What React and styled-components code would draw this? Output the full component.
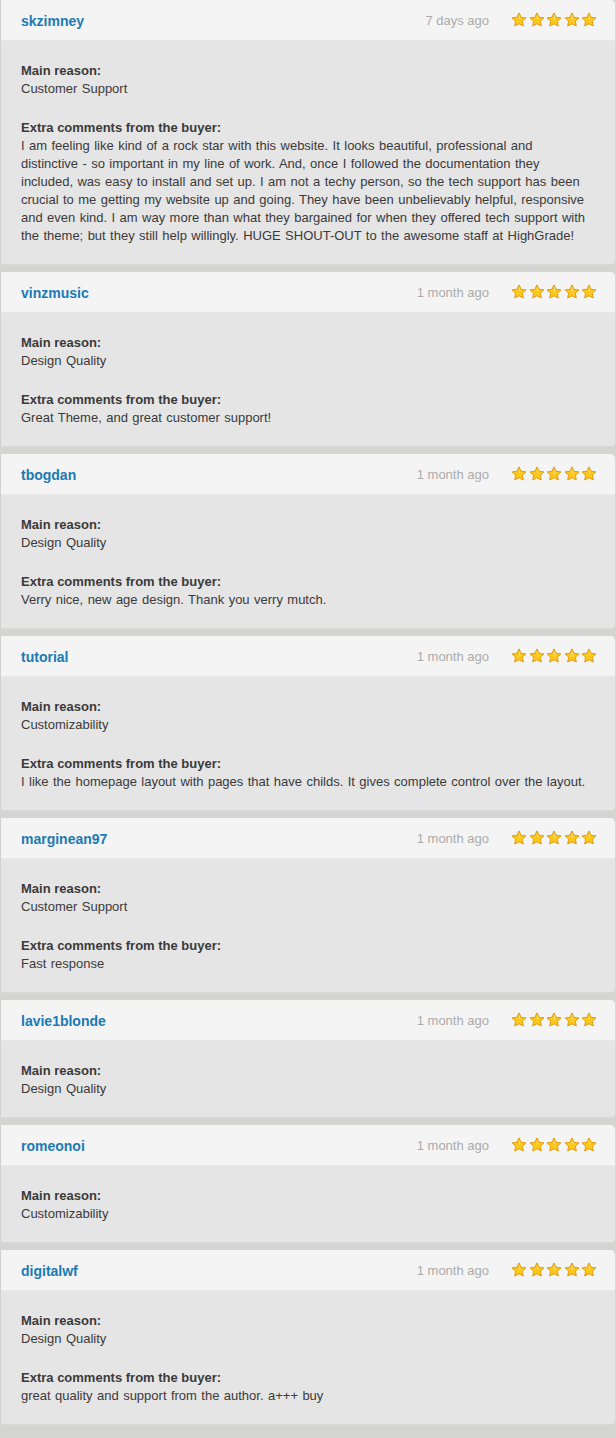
import React from 'react';
import styled, { createGlobalStyle } from 'styled-components';

const GlobalStyle = createGlobalStyle`
  html, body {
    margin: 0;
    padding: 0;
    background: #d4d4d3;
  }
  body {
    font-family: "Liberation Sans", Arial, Helvetica, sans-serif;
    -webkit-font-smoothing: antialiased;
  }
`;

const StyledList = styled.div`
  display: flex;
  flex-direction: column;
  gap: 7px;
  padding-bottom: 13px;
`;

const StyledCard = styled.div`
  background: #e5e5e5;
  border-radius: 0 5px 5px 0;
  border: 1px solid #d9d9d9;
  border-top: none;
  border-left-color: #d0d0d0;
  overflow: hidden;
`;

const StyledHeader = styled.div`
  height: 40px;
  display: flex;
  align-items: center;
  padding: 0 18px 0 20px;
  background: #f4f4f4;
  border-bottom: 1px solid #e9e9e9;
  border-radius: 0 5px 0 0;
`;

const StyledName = styled.div`
  flex: 1;
  font-size: 14px;
  font-weight: bold;
  color: #1b7ab4;
  padding-top: 2px;
`;

const StyledDate = styled.div`
  font-size: 13px;
  color: #ababab;
  margin-right: 22px;
  padding-top: 1px;
`;

const StyledStars = styled.div`
  display: flex;
  gap: 1.5px;
`;

const StyledBody = styled.div`
  padding: 21px 25px 19px 20px;
  display: flex;
  flex-direction: column;
  gap: 21px;
  font-size: 13px;
  line-height: 18px;
  color: #3a3a3a;
`;

const StyledLabel = styled.div`
  font-weight: bold;
`;

const StyledText = styled.div`
  word-spacing: 0.8px;
`;

const Star = () => (
  <svg width="16" height="16" viewBox="0 0 16 16">
    <path
      d="M8 0.9 L10.1 5.3 L14.9 5.9 L11.4 9.2 L12.3 14 L8 11.7 L3.7 14 L4.6 9.2 L1.1 5.9 L5.9 5.3 Z"
      fill="#fcc81e"
      stroke="#e39a0b"
      strokeWidth="1"
      strokeLinejoin="round"
    />
    <path d="M8 3 L9.4 6.2 L8 8 Z" fill="#fde27a" />
  </svg>
);

const reviews = [
  {
    name: 'skzimney',
    date: '7 days ago',
    reason: 'Customer Support',
    comment:
      'I am feeling like kind of a rock star with this website. It looks beautiful, professional and distinctive - so important in my line of work. And, once I followed the documentation they included, was easy to install and set up. I am not a techy person, so the tech support has been crucial to me getting my website up and going. They have been unbelievably helpful, responsive and even kind. I am way more than what they bargained for when they offered tech support with the theme; but they still help willingly. HUGE SHOUT-OUT to the awesome staff at HighGrade!',
  },
  {
    name: 'vinzmusic',
    date: '1 month ago',
    reason: 'Design Quality',
    comment: 'Great Theme, and great customer support!',
  },
  {
    name: 'tbogdan',
    date: '1 month ago',
    reason: 'Design Quality',
    comment: 'Verry nice, new age design. Thank you verry mutch.',
  },
  {
    name: 'tutorial',
    date: '1 month ago',
    reason: 'Customizability',
    comment:
      'I like the homepage layout with pages that have childs. It gives complete control over the layout.',
  },
  {
    name: 'marginean97',
    date: '1 month ago',
    reason: 'Customer Support',
    comment: 'Fast response',
  },
  { name: 'lavie1blonde', date: '1 month ago', reason: 'Design Quality' },
  { name: 'romeonoi', date: '1 month ago', reason: 'Customizability' },
  {
    name: 'digitalwf',
    date: '1 month ago',
    reason: 'Design Quality',
    comment: 'great quality and support from the author. a+++ buy',
  },
];

const Review = ({ name, date, reason, comment }) => (
  <StyledCard>
    <StyledHeader>
      <StyledName>{name}</StyledName>
      <StyledDate>{date}</StyledDate>
      <StyledStars>
        {[0, 1, 2, 3, 4].map((i) => (
          <Star key={i} />
        ))}
      </StyledStars>
    </StyledHeader>
    <StyledBody>
      <div>
        <StyledLabel>Main reason:</StyledLabel>
        <StyledText>{reason}</StyledText>
      </div>
      {comment && (
        <div>
          <StyledLabel>Extra comments from the buyer:</StyledLabel>
          <StyledText>{comment}</StyledText>
        </div>
      )}
    </StyledBody>
  </StyledCard>
);

const App = () => (
  <>
    <GlobalStyle />
    <StyledList>
      {reviews.map((r) => (
        <Review key={r.name} {...r} />
      ))}
    </StyledList>
  </>
);

export default App;
